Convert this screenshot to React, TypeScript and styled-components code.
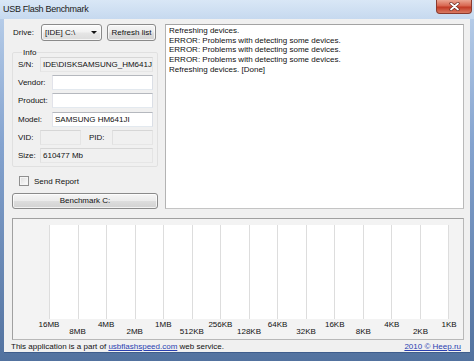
import styled, { createGlobalStyle } from 'styled-components';

const GlobalStyle = createGlobalStyle`
  html, body {
    margin: 0;
    padding: 0;
    background: #ffffff;
  }
  body {
    font-family: "Liberation Sans", Arial, sans-serif;
    font-size: 8px;
    color: #111;
  }
`;

const Window = styled.div`
  width: 474px;
  height: 361px;
  display: flex;
  flex-direction: column;
  overflow: hidden;
  background: linear-gradient(180deg, #bcd1eb 0%, #84a3cf 40%, #52729f 100%);
`;

const TitleBar = styled.div`
  height: 19px;
  flex: none;
  display: flex;
  align-items: flex-start;
  background: linear-gradient(180deg, #d9e7f6 0%, #c6d9ef 100%);
`;

const Title = styled.span`
  font-family: "Liberation Sans", Arial, sans-serif;
  font-size: 9px;
  letter-spacing: -0.3px;
  line-height: 19px;
  padding-left: 3px;
  color: #1b1b1b;
`;

const CloseButton = styled.div`
  margin-left: auto;
  margin-right: 2px;
  width: 36px;
  height: 14px;
  display: flex;
  align-items: center;
  justify-content: center;
  box-sizing: border-box;
  border: 1px solid #8a3a2e;
  border-top: none;
  border-radius: 0 0 4px 4px;
  background: linear-gradient(180deg, #eba592 0%, #d86650 45%, #c23a25 55%, #d97a62 100%);
`;

const Body = styled.div`
  flex: 1;
  display: flex;
  padding: 0 4px 8px 4px;
  min-height: 0;
`;

const Client = styled.div`
  flex: 1;
  min-width: 0;
  display: flex;
  flex-direction: column;
  background: #f0f0f0;
  border-bottom: 1px solid #3e5d8c;
  padding: 5px 6px 0 8px;
`;

const TopSection = styled.div`
  display: flex;
  gap: 7px;
  height: 185px;
`;

const LeftColumn = styled.div`
  width: 146px;
  flex: none;
  display: flex;
  flex-direction: column;
`;

const DriveRow = styled.div`
  display: flex;
  align-items: center;
  height: 17px;
`;

const DriveLabel = styled.span`
  width: 29px;
  padding-left: 1px;
  box-sizing: border-box;
`;

const WinButton = styled.div<{ $w?: number }>`
  box-sizing: border-box;
  ${(p) => (p.$w ? `width: ${p.$w}px; flex: none;` : 'width: 100%;')}
  height: 100%;
  display: flex;
  align-items: center;
  justify-content: center;
  white-space: nowrap;
  border: 1px solid #8a8a8a;
  border-radius: 3px;
  background: linear-gradient(180deg, #f6f6f6 0%, #ebebeb 48%, #dddddd 52%, #d2d2d2 100%);
  box-shadow: inset 0 0 0 1px rgba(255, 255, 255, 0.7);
`;

const Combo = styled(WinButton)`
  justify-content: space-between;
  padding: 0 4px 0 3px;
  margin-right: 5px;
  background: linear-gradient(180deg, #fbfbfb 0%, #f1f1f1 48%, #e6e6e6 52%, #dcdcdc 100%);
`;

const Arrow = styled.span`
  width: 0;
  height: 0;
  border-left: 3px solid transparent;
  border-right: 3px solid transparent;
  border-top: 3px solid #111;
`;

const InfoGroup = styled.fieldset`
  margin: 7px 0 0 0;
  padding: 0 4px 3px 5px;
  border: 1px solid #e0e0e0;
  border-radius: 2px;
  display: flex;
  flex-direction: column;
  gap: 3.2px;
  min-width: 0;
`;

const Legend = styled.legend`
  padding: 0 1px;
  margin-left: 4px;
  line-height: 9px;
  height: 9px;
`;

const FieldRow = styled.div`
  display: flex;
  align-items: center;
  height: 15px;
`;

const FieldLabel = styled.span<{ $w: number; $ml?: number }>`
  width: ${(p) => p.$w}px;
  margin-left: ${(p) => p.$ml ?? 0}px;
  flex: none;
  white-space: nowrap;
`;

const TextBox = styled.div<{ $ro?: boolean; $w?: number }>`
  box-sizing: border-box;
  height: 100%;
  ${(p) => (p.$w ? `width: ${p.$w}px; flex: none;` : 'flex: 1;')}
  min-width: 0;
  display: flex;
  align-items: center;
  padding-left: 2px;
  white-space: nowrap;
  background: ${(p) => (p.$ro ? '#f0f0f0' : '#ffffff')};
  border: 1px solid;
  border-color: ${(p) => (p.$ro ? '#d6d6d6 #e4e4e4 #e6e6e6 #e0e0e0' : '#b5b8be #dbdfe6 #e3e9ef #e2e3ea')};
`;

const CheckRow = styled.div`
  display: flex;
  align-items: center;
  gap: 5px;
  height: 9px;
  margin: 10px 0 0 7px;
`;

const CheckBox = styled.span`
  box-sizing: border-box;
  width: 10px;
  height: 10px;
  border: 1px solid #8f8f8f;
  background: linear-gradient(135deg, #dcdcdc 0%, #f4f4f4 70%, #ffffff 100%);
  box-shadow: inset 0 0 0 1px #f5f5f5;
`;

const BenchRow = styled.div`
  height: 16px;
  margin-top: 7px;
  display: flex;
`;

const LogBox = styled.div`
  flex: 1;
  min-width: 0;
  box-sizing: border-box;
  background: #ffffff;
  border: 1px solid;
  border-color: #a3a3a3 #b9b9b9 #c4c4c4 #b3b3b3;
  padding: 1px 3px;
  line-height: 9.7px;
`;

const ChartGroup = styled.div`
  margin-top: 9px;
  height: 122px;
  box-sizing: border-box;
  border: 1px solid;
  border-color: #a0a0a0 #b8b8b8 #b8b8b8 #a0a0a0;
  background: #f3f3f3;
  padding: 6px 13px 0 36px;
  min-width: 0;
`;

const Plot = styled.div`
  display: flex;
  width: 400px;
  height: 94px;
`;

const PlotColumn = styled.div<{ $last?: boolean }>`
  flex: 1;
  background: #ffffff;
  border-left: 1px solid #dddddd;
  ${(p) => (p.$last ? 'border-right: 1px solid #dddddd;' : '')}
`;

const AxisLabels = styled.div`
  display: grid;
  width: 428.6px;
  grid-template-columns: repeat(15, 1fr);
  margin-left: -14.286px;
`;

const AxisLabel = styled.span<{ $low: boolean }>`
  text-align: center;
  line-height: 9px;
  padding-top: ${(p) => (p.$low ? 8 : 1)}px;
  white-space: nowrap;
`;

const Footer = styled.div`
  flex: 1;
  display: flex;
  align-items: center;
  justify-content: space-between;
  margin-left: -1px;
  padding-right: 3px;
`;

const Link = styled.a`
  color: #2a3fb0;
  text-decoration: underline;
`;

const logLines = [
  'Refreshing devices.',
  'ERROR: Problems with detecting some devices.',
  'ERROR: Problems with detecting some devices.',
  'ERROR: Problems with detecting some devices.',
  'Refreshing devices. [Done]',
];

const sizes = [
  '16MB', '8MB', '4MB', '2MB', '1MB', '512KB', '256KB', '128KB',
  '64KB', '32KB', '16KB', '8KB', '4KB', '2KB', '1KB',
];

export default function App() {
  return (
    <>
      <GlobalStyle />
      <Window>
        <TitleBar>
          <Title>USB Flash Benchmark</Title>
          <CloseButton>
            <svg width="11" height="9" viewBox="0 0 11 9">
              <path d="M2 1.5 L9 7.5 M9 1.5 L2 7.5" stroke="#6b2a20" strokeWidth="3.2" strokeLinecap="round" />
              <path d="M2 1.5 L9 7.5 M9 1.5 L2 7.5" stroke="#ffffff" strokeWidth="1.8" strokeLinecap="round" />
            </svg>
          </CloseButton>
        </TitleBar>
        <Body>
          <Client>
            <TopSection>
              <LeftColumn>
                <DriveRow>
                  <DriveLabel>Drive:</DriveLabel>
                  <Combo $w={61}>
                    <span>[IDE] C:\</span>
                    <Arrow />
                  </Combo>
                  <WinButton $w={49}>Refresh list</WinButton>
                </DriveRow>
                <InfoGroup>
                  <Legend>Info</Legend>
                  <FieldRow>
                    <FieldLabel $w={22}>S/N:</FieldLabel>
                    <TextBox $ro>IDE\DISKSAMSUNG_HM641J</TextBox>
                  </FieldRow>
                  <FieldRow>
                    <FieldLabel $w={34}>Vendor:</FieldLabel>
                    <TextBox />
                  </FieldRow>
                  <FieldRow>
                    <FieldLabel $w={34}>Product:</FieldLabel>
                    <TextBox />
                  </FieldRow>
                  <FieldRow>
                    <FieldLabel $w={34}>Model:</FieldLabel>
                    <TextBox>SAMSUNG HM641JI</TextBox>
                  </FieldRow>
                  <FieldRow>
                    <FieldLabel $w={22}>VID:</FieldLabel>
                    <TextBox $ro $w={41} />
                    <FieldLabel $w={23} $ml={8}>PID:</FieldLabel>
                    <TextBox $ro $w={41} />
                  </FieldRow>
                  <FieldRow>
                    <FieldLabel $w={22}>Size:</FieldLabel>
                    <TextBox $ro>610477 Mb</TextBox>
                  </FieldRow>
                </InfoGroup>
                <CheckRow>
                  <CheckBox />
                  <span>Send Report</span>
                </CheckRow>
                <BenchRow>
                  <WinButton>Benchmark C:</WinButton>
                </BenchRow>
              </LeftColumn>
              <LogBox>
                {logLines.map((line, i) => (
                  <div key={i}>{line}</div>
                ))}
              </LogBox>
            </TopSection>
            <ChartGroup>
              <Plot>
                {Array.from({ length: 14 }, (_, i) => (
                  <PlotColumn key={i} $last={i === 13} />
                ))}
              </Plot>
              <AxisLabels>
                {sizes.map((s, i) => (
                  <AxisLabel key={s + i} $low={i % 2 === 1}>
                    {s}
                  </AxisLabel>
                ))}
              </AxisLabels>
            </ChartGroup>
            <Footer>
              <span>
                This application is a part of <Link>usbflashspeed.com</Link> web service.
              </span>
              <Link>2010 © Heep.ru</Link>
            </Footer>
          </Client>
        </Body>
      </Window>
    </>
  );
}
